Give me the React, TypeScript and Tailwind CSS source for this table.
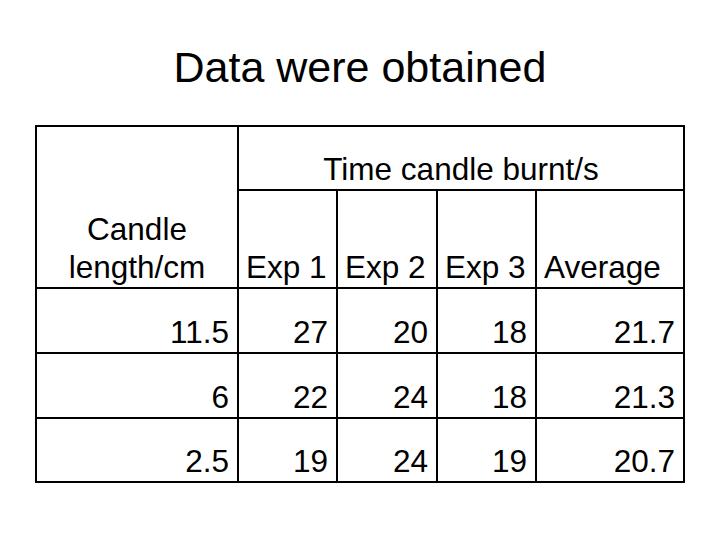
import React from "react";

const rows = [
  ["11.5", "27", "20", "18", "21.7"],
  ["6", "22", "24", "18", "21.3"],
  ["2.5", "19", "24", "19", "20.7"],
];

export default function App() {
  return (
    <div
      className="w-[720px] h-[540px] bg-white text-black overflow-hidden"
      style={{ fontFamily: '"Liberation Sans", Arial, sans-serif' }}
    >
      <h1 className="pt-[43px] text-center text-[43px] leading-[48px] font-normal">
        Data were obtained
      </h1>
      <table className="mt-[34px] ml-[35px] w-[650px] table-fixed border-collapse text-[31.5px] leading-[38px]">
        <colgroup>
          <col className="w-[202px]" />
          <col className="w-[99px]" />
          <col className="w-[100px]" />
          <col className="w-[99px]" />
          <col className="w-[148px]" />
        </colgroup>
        <tbody>
          <tr className="h-[64px]">
            <td
              rowSpan={2}
              className="border-2 border-black align-bottom text-center pb-[1px]"
            >
              Candle
              <br />
              length/cm
            </td>
            <td
              colSpan={4}
              className="border-2 border-black align-bottom text-center pb-[1px]"
            >
              Time candle burnt/s
            </td>
          </tr>
          <tr className="h-[98px]">
            {["Exp 1", "Exp 2", "Exp 3", "Average"].map((h) => (
              <td
                key={h}
                className="border-2 border-black align-bottom text-left pl-[7px] pb-[1px] whitespace-nowrap"
              >
                {h}
              </td>
            ))}
          </tr>
          {rows.map((r, i) => (
            <tr key={i} className={i === 2 ? "h-[64px]" : "h-[65px]"}>
              {r.map((v, j) => (
                <td
                  key={j}
                  className="border-2 border-black align-bottom text-right pr-[8px] pb-[1px]"
                >
                  {v}
                </td>
              ))}
            </tr>
          ))}
        </tbody>
      </table>
    </div>
  );
}
